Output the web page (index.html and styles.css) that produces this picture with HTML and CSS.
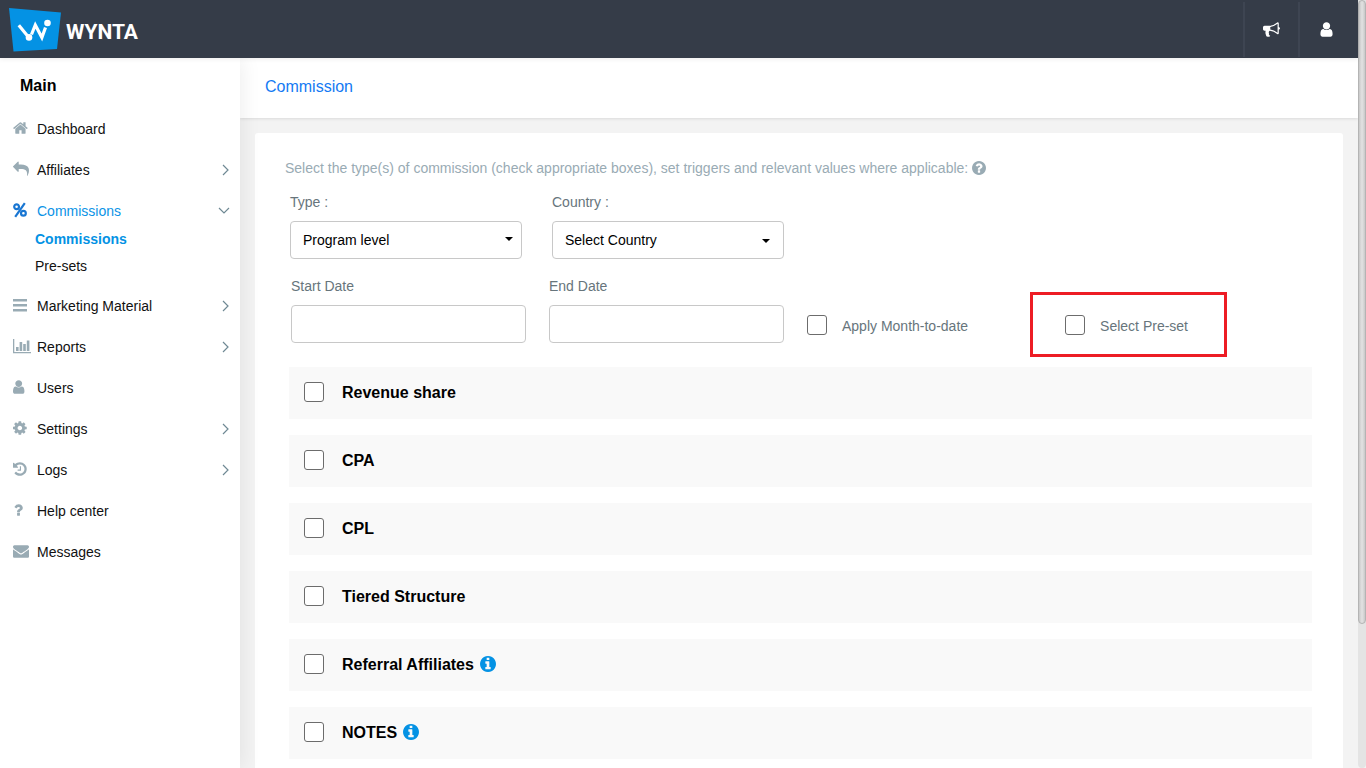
FILE: index.html
```html
<!DOCTYPE html>
<html lang="en">
<head>
<meta charset="utf-8">
<title>Wynta – Commission</title>
<link rel="stylesheet" href="styles.css">
</head>
<body>
<svg class="sprite" aria-hidden="true">
  <symbol id="user" viewBox="256 0 2016 1792"><path d="M1536 1399q0 109-62.5 187t-150.5 78h-854q-88 0-150.5-78t-62.5-187q0-85 8.5-160.5t31.5-152 58.5-131 94-89 134.5-34.5q131 128 313 128t313-128q76 0 134.5 34.5t94 89 58.5 131 31.5 152 8.5 160.5zm-256-887q0 159-112.5 271.5t-271.5 112.5-271.5-112.5-112.5-271.5 112.5-271.5 271.5-112.5 271.5 112.5 112.5 271.5z"/></symbol>
  <symbol id="info" viewBox="128 128 1536 1536"><path d="M1152 1376v-160q0-14-9-23t-23-9h-96v-512q0-14-9-23t-23-9h-320q-14 0-23 9t-9 23v160q0 14 9 23t23 9h96v320h-96q-14 0-23 9t-9 23v160q0 14 9 23t23 9h448q14 0 23-9t9-23zm-128-896v-160q0-14-9-23t-23-9h-192q-14 0-23 9t-9 23v160q0 14 9 23t23 9h192q14 0 23-9t9-23zm640 416q0 209-103 385.5t-279.5 279.5-385.5 103-385.5-103-279.5-279.5-103-385.5 103-385.5 279.5-279.5 385.5-103 385.5 103 279.5 279.5 103 385.5z"/></symbol>
  <symbol id="chevron" viewBox="0 0 8 12"><path d="M1 1l5 5-5 5" fill="none" stroke="currentColor" stroke-width="1.2"/></symbol>
</svg>
<div class="app">
  <header class="topbar">
    <a class="brand" href="#">
      <svg class="brand-mark" viewBox="0 0 52 44" aria-hidden="true">
        <path d="M0 0l52 4.500-4 36.500-43.500 2.500z" fill="#0492e4"/>
        <path d="M9.800 17.300l8.400 10.200M22.500 26.500l3.800-9.500 6.600 12.500 3.600-10" fill="none" stroke="#fff" stroke-width="3.200"/>
        <circle cx="38.500" cy="15" r="3.300" fill="#fff"/><circle cx="20" cy="29.400" r="3.300" fill="#fff"/>
      </svg>
      <span>WYNTA</span>
    </a>
    <div class="top-actions">
      <button type="button" aria-label="Announcements"><svg class="bullhorn" viewBox="0 0 1792 1792"><path d="M1664 640q53 0 90.5 37.500t37.500 90.500-37.500 90.500-90.500 37.500v384q0 52-38 90t-90 38q-417-347-812-380-58 19-91 66t-31 100.500 40 92.500q-20 33-23 65.500t6 58 33.500 55 48 50 61.500 50.500q-29 58-111.500 83t-168.500 11.500-132-55.500q-7-23-29.500-87.500t-32-94.500-23-89-15-101 3.500-98.500 22-110.500h-122q-66 0-113-47t-47-113v-192q0-66 47-113t113-47h480q435 0 896-384 52 0 90 38t38 90v384zm-128 604v-954q-394 302-768 343v270q377 42 768 341z"/></svg></button>
      <button type="button" aria-label="Account"><svg class="account" viewBox="256 0 1280 1792"><path d="M1536 1399q0 109-62.500 187t-150.500 78h-854q-88 0-150.500-78t-62.500-187q0-85 8.500-160.500t31.500-152 58.500-131 94-89 134.500-34.500q131 128 313 128t313-128q76 0 134.500 34.500t94 89 58.500 131 31.500 152 8.500 160.500zm-256-887q0 159-112.500 271.500t-271.500 112.500-271.500-112.500-112.500-271.500 112.500-271.500 271.500-112.500 271.500 112.500 112.500 271.500z"/></svg></button>
    </div>
  </header>
  <div class="body">
    <nav class="sidebar" aria-label="Main">
      <h2>Main</h2>
      <ul class="menu">
        <li><a href="#"><svg viewBox="64 0 2016 1792"><path d="M1472 992v480q0 26-19 45t-45 19h-384v-384h-256v384h-384q-26 0-45-19t-19-45v-480q0-1 .5-3t.5-3l575-474 575 474q1 2 1 6zm223-69l-62 74q-8 9-21 11h-3q-13 0-21-7l-692-577-692 577q-12 8-24 7-13-2-21-11l-62-74q-8-10-7-23.500t11-21.500l719-599q32-26 76-26t76 26l244 204v-195q0-14 9-23t23-9h192q14 0 23 9t9 23v408l219 182q10 8 11 21.500t-7 23.500z"/></svg>Dashboard</a></li>
        <li><a href="#"><svg viewBox="0 0 2016 1792"><path d="M1792 1120q0 166-127 451-3 7-10.500 24t-13.500 30-13 22q-12 17-28 17-15 0-23.500-10t-8.500-25q0-9 2.500-26.500t2.500-23.500q5-68 5-123 0-101-17.500-181t-48.500-138.500-80-101-105.500-69.500-133-42.500-154-21.500-175.500-6h-224v256q0 26-19 45t-45 19-45-19l-512-512q-19-19-19-45t19-45l512-512q19-19 45-19t45 19 19 45v256h224q713 0 875 403 53 134 53 333z"/></svg>Affiliates<svg class="arrow"><use href="#chevron"/></svg></a></li>
        <li><a class="active" href="#"><svg viewBox="0 0 18 16"><g fill="none" stroke="currentColor" stroke-width="2.200"><circle cx="3.600" cy="4.700" r="2.400"/><circle cx="10.400" cy="11.300" r="2.400"/><path d="M11.800 1.200L2.200 14.800"/></g></svg>Commissions<svg class="arrow open"><use href="#chevron"/></svg></a>
          <ul class="submenu">
            <li><a class="current" href="#">Commissions</a></li>
            <li><a href="#">Pre-sets</a></li>
          </ul>
        </li>
        <li><a href="#"><svg viewBox="0 0 18 16"><path d="M0 2h14v2.500H0zM0 7h14v2.500H0zM0 12h14v2.500H0z"/></svg>Marketing Material<svg class="arrow"><use href="#chevron"/></svg></a></li>
        <li><a href="#"><svg viewBox="0 0 18 16"><path d="M0 1h1.300v13H18v1.300H0zM3 9h2.600v4H3zM6.600 4h2.600v9H6.600zM10.200 6h2.600v7h-2.600zM13.800 2.500h2.600V13h-2.600z"/></svg>Reports<svg class="arrow"><use href="#chevron"/></svg></a></li>
        <li><a href="#"><svg><use href="#user"/></svg>Users</a></li>
        <li><a href="#"><svg viewBox="128 0 2016 1792"><path d="M1152 896q0-106-75-181t-181-75-181 75-75 181 75 181 181 75 181-75 75-181zm512-109v222q0 12-8 23t-20 13l-185 28q-19 54-39 91 35 50 107 138 10 12 10 25t-9 23q-27 37-99 108t-94 71q-12 0-26-9l-138-108q-44 23-91 38-16 136-29 186-7 28-36 28h-222q-14 0-24.500-8.500t-11.500-21.500l-28-184q-49-16-90-37l-141 107q-10 9-25 9-14 0-25-11-126-114-165-168-7-10-7-23 0-12 8-23 15-21 51-66.500t54-70.500q-27-50-41-99l-183-27q-13-2-21-12.500t-8-23.500v-222q0-12 8-23t19-13l186-28q14-46 39-92-40-57-107-138-10-12-10-24 0-10 9-23 26-36 98.500-107.500t94.500-71.500q13 0 26 10l138 107q44-23 91-38 16-136 29-186 7-28 36-28h222q14 0 24.500 8.500t11.500 21.500l28 184q49 16 90 37l142-107q9-9 24-9 13 0 25 10 129 119 165 170 7 8 7 22 0 12-8 23-15 21-51 66.500t-54 70.500q26 50 41 98l183 28q13 2 21 12.500t8 23.500z"/></svg>Settings<svg class="arrow"><use href="#chevron"/></svg></a></li>
        <li><a href="#"><svg viewBox="128 0 2016 1792"><path d="M1664 896q0 156-61 298t-164 245-245 164-298 61q-172 0-327-72.500t-264-204.500q-7-10-6.500-22.500t8.500-20.500l137-138q10-9 25-9 16 2 23 12 73 95 179 147t225 52q104 0 198.500-40.500t163.500-109.500 109.500-163.500 40.500-198.500-40.500-198.500-109.500-163.500-163.500-109.500-198.500-40.500q-98 0-188 35.500t-160 101.500l137 138q31 30 14 69-17 40-59 40h-448q-26 0-45-19t-19-45v-448q0-42 40-59 39-17 69 14l130 129q107-101 244.500-156.500t284.500-55.500q156 0 298 61t245 164 164 245 61 298zm-640-288v448q0 14-9 23t-23 9h-320q-14 0-23-9t-9-23v-64q0-14 9-23t23-9h224v-352q0-14 9-23t23-9h64q14 0 23 9t9 23z"/></svg>Logs<svg class="arrow"><use href="#chevron"/></svg></a></li>
        <li><a href="#"><svg viewBox="310 0 2016 1792"><path d="M1088 1256v240q0 16-12 28t-28 12h-240q-16 0-28-12t-12-28v-240q0-16 12-28t28-12h240q16 0 28 12t12 28zm316-600q0 54-15.500 101t-35 76.500-55 59.500-57.500 43.500-61 35.500q-41 23-68.500 65t-27.500 67q0 17-12 32.500t-28 15.500h-240q-15 0-25.500-18.500t-10.500-37.500v-45q0-83 65-156.500t143-108.500q59-27 84-56t25-76q0-42-46.500-74t-107.500-32q-65 0-108 29-35 25-107 115-13 16-31 16-12 0-25-8l-164-125q-13-10-15.500-25t5.500-28q160-266 464-266 80 0 161 31t146 83 106 127.500 41 158.500z"/></svg>Help center</a></li>
        <li><a href="#"><svg viewBox="0 0 2016 1792"><path d="M1792 710v794q0 66-47 113t-113 47h-1472q-66 0-113-47t-47-113v-794q44 49 101 87 362 246 497 345 57 42 92.500 65.500t94.500 48 110 24.500h2q51 0 110-24.500t94.500-48 92.500-65.500q170-123 498-345 57-39 100-87zm0-294q0 79-49 151t-122 123q-376 261-468 325-10 7-42.500 31t-54 38.500-52 32.500-57.500 27-50 9h-2q-23 0-50-9t-57.500-27-52-32.500-54-38.500-42.500-31q-91-64-262-182.500t-205-142.500q-62-42-117-115.500t-55-136.500q0-78 41.500-130t118.500-52h1472q65 0 112.500 47t47.500 113z"/></svg>Messages</a></li>
      </ul>
    </nav>
    <main class="content">
      <div class="breadcrumb"><a href="#">Commission</a></div>
      <form class="card">
        <p class="intro">Select the type(s) of commission (check appropriate boxes), set triggers and relevant values where applicable: <svg viewBox="128 128 1536 1536"><path d="M1024 1376v-192q0-14-9-23t-23-9h-192q-14 0-23 9t-9 23v192q0 14 9 23t23 9h192q14 0 23-9t9-23zm256-672q0-88-55.500-163t-138.500-116-170-41q-243 0-371 213-15 24 8 42l132 100q7 6 19 6 16 0 25-12 53-68 86-92 34-24 86-24 48 0 85.500 26t37.500 59q0 38-20 61t-68 45q-63 28-115.500 86.500t-52.500 125.500v36q0 14 9 23t23 9h192q14 0 23-9t9-23q0-19 21.500-49.500t54.500-49.500q32-18 49-28.500t46-35 44.500-48 28-60.500 12.500-81zm384 192q0 209-103 385.500t-279.500 279.500-385.500 103-385.500-103-279.500-279.500-103-385.500 103-385.500 279.500-279.500 385.500-103 385.500 103 279.500 279.500 103 385.500z"/></svg></p>
        <div class="selects">
          <div class="field">
            <label for="type">Type :</label>
            <div class="select"><select id="type"><option>Program level</option></select></div>
          </div>
          <div class="field">
            <label for="country">Country :</label>
            <div class="select inset"><select id="country"><option>Select Country</option></select></div>
          </div>
        </div>
        <div class="dates">
          <div class="field"><label for="start">Start Date</label><input id="start" type="text"></div>
          <div class="field"><label for="end">End Date</label><input id="end" type="text"></div>
          <label class="check"><input type="checkbox">Apply Month-to-date</label>
          <label class="check preset"><input type="checkbox">Select Pre-set</label>
        </div>
        <div class="options">
          <label><input type="checkbox">Revenue share</label>
          <label><input type="checkbox">CPA</label>
          <label><input type="checkbox">CPL</label>
          <label><input type="checkbox">Tiered Structure</label>
          <label><input type="checkbox">Referral Affiliates<svg><use href="#info"/></svg></label>
          <label><input type="checkbox">NOTES<svg><use href="#info"/></svg></label>
        </div>
      </form>
    </main>
  </div>
</div>
<div class="scroll-track"><div class="scroll-thumb"></div></div>
</body>
</html>
```
FILE: styles.css
```css
* { box-sizing: border-box; }

body {
  margin: 0;
  display: flex;
  height: 100vh;
  overflow: hidden;
  background: #f3f3f3;
  color: #000;
  font: 14px/20px "Liberation Sans", Arial, sans-serif;
}

a { color: inherit; text-decoration: none; }
ul { list-style: none; margin: 0; padding: 0; }
svg { fill: currentColor; flex: none; }
.sprite { position: absolute; width: 0; height: 0; }

.app { flex: 1; min-width: 0; display: flex; flex-direction: column; }

/* Top bar */
.topbar {
  flex: none;
  display: flex;
  justify-content: space-between;
  height: 58px;
  padding: 0 5px 0 9px;
  background: #353c48;
  color: #fff;
  position: relative;
  z-index: 2;
  box-shadow: 0 1px 5px rgba(0, 0, 0, .08);
}
.brand {
  display: flex;
  align-items: center;
  gap: 5px;
  padding-top: 2px;
  font: 700 21px/28px Roboto, sans-serif;
}
.brand-mark { width: 52px; height: 44px; }
.brand span { padding-top: 4px; }
.top-actions { display: flex; padding: 2px 0 1px; }
.top-actions button {
  width: 55px;
  padding: 0;
  border: 0;
  border-left: 2px solid #3e4552;
  background: none;
  color: #fff;
  display: flex;
  align-items: center;
  justify-content: center;
}
.bullhorn { width: 17px; height: 17px; }
.account { width: 13px; height: 17px; }

.body { flex: 1; min-height: 0; display: flex; }

/* Sidebar */
.sidebar {
  flex: none;
  width: 240px;
  background: #fff;
  position: relative;
  z-index: 1;
  box-shadow: 1px 0 20px rgba(0, 0, 0, .08);
}
.sidebar h2 { margin: 0; padding: 18px 20px 12px; font-size: 16px; line-height: 20px; }
.menu > li > a {
  display: flex;
  align-items: center;
  gap: 6px;
  height: 41px;
  padding: 0 10px 0 13px;
  color: #111;
}
.menu > li > a svg { width: 18px; height: 16px; margin-bottom: 1px; color: #99abb4; }
.menu > li > a .arrow { width: 8px; height: 12px; margin: 0 0 0 auto; color: #6f8994; }
.menu > li > a .arrow.open { transform: rotate(90deg); margin-right: 2px; }
.menu > li > a.active { color: #0b93e6; }
.menu > li > a.active svg:first-child { color: #1976d2; }
.submenu { margin: -5px 0 5px; padding-left: 35px; }
.submenu a { display: block; line-height: 27px; color: #111; }
.submenu .current { font-weight: bold; color: #0492e4; }

/* Content */
.content { flex: 1; min-width: 0; display: flex; flex-direction: column; }
.breadcrumb {
  padding: 19px 25px 21px;
  background: #fff;
  box-shadow: 0 1px 3px rgba(0, 0, 0, .1);
  font-size: 16px;
  line-height: 20px;
}
.breadcrumb a { color: #147af3; }
.card {
  flex: 1;
  margin: 15px 15px 0;
  padding: 25px 31px 0 34px;
  background: #fff;
  border-radius: 3px 3px 0 0;
}
.intro { display: flex; align-items: center; gap: 4px; margin: 0 0 14px -4px; color: #99abb4; }
.intro svg { width: 14px; height: 14px; }
.selects, .dates { display: flex; }
.selects { gap: 30px; padding-left: 1px; margin-bottom: 17px; }
.dates { gap: 23px; padding-left: 2px; align-items: flex-end; margin-bottom: 24px; }
.field { display: flex; flex-direction: column; gap: 9px; width: 235px; color: #67757c; }
.selects .field { width: 232px; }
.field input, .field select {
  width: 100%;
  height: 38px;
  margin: 0;
  padding: 0 12px;
  border: 1px solid #c8c8c8;
  border-radius: 4px;
  background: #fff;
  color: #000;
  font: inherit;
  appearance: none;
}
.select { position: relative; }
.select::after {
  content: "";
  position: absolute;
  right: 9px;
  top: 16px;
  border: 4px solid transparent;
  border-top-color: #000;
  border-bottom: 0;
  pointer-events: none;
}
.select.inset::after { right: 14px; top: 18px; }

.check { display: flex; align-items: center; gap: 15px; height: 34px; color: #67757c; }
input[type="checkbox"] {
  appearance: none;
  flex: none;
  width: 20px;
  height: 20px;
  margin: 0 0 2px;
  border: 1px solid #6c6c6c;
  border-radius: 3px;
  background: #fff;
}
input[type="checkbox"]:checked { background: #0492e4; }
.preset { position: relative; margin-left: 74px; }
.preset::after {
  content: "";
  position: absolute;
  inset: -17px -39px -14px -35px;
  border: 3px solid #ed1c24;
  pointer-events: none;
}

.options { display: flex; flex-direction: column; gap: 16px; }
.options label {
  display: flex;
  align-items: center;
  height: 52px;
  padding: 0 15px;
  background: #f9f9f9;
  font-size: 16px;
  font-weight: bold;
}
.options input { margin-right: 18px; }
.options svg { width: 16px; height: 16px; margin: 0 0 2px 6px; color: #0492e4; }

/* Page scrollbar */
.scroll-track { flex: none; width: 8px; background: #e4e4e4; border-radius: 0 0 4px 4px; }
.scroll-thumb {
  height: 81.25%;
  border: 1px solid #b4b4b4;
  border-radius: 4px;
  background: linear-gradient(90deg, #c8c8c8, #dedede 40%, #dedede 60%, #c8c8c8);
}
```
